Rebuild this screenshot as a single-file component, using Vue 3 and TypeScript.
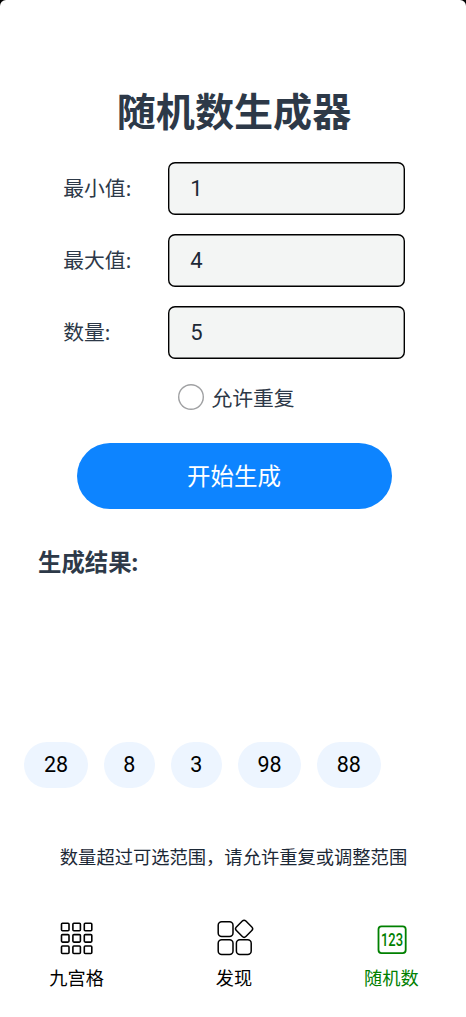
<script setup lang="ts">
import { ref } from 'vue'

const fields = ref([
  { label: '最小值:', value: '1' },
  { label: '最大值:', value: '4' },
  { label: '数量:', value: '5' },
])
const allowRepeat = ref(false)
const results = ref<number[]>([28, 8, 3, 98, 88])
const gridOffsets = [1, 12.4, 23.8]
</script>

<template>
  <div class="backdrop">
    <main class="screen">
      <h1 class="title">随机数生成器</h1>

      <div class="form">
        <label v-for="field in fields" :key="field.label" class="row">
          <span class="label">{{ field.label }}</span>
          <input v-model="field.value" class="input" type="text" inputmode="numeric" />
        </label>
      </div>

      <label class="repeat">
        <input v-model="allowRepeat" class="check" type="checkbox" />
        <span>允许重复</span>
      </label>

      <button class="generate" type="button">开始生成</button>

      <h2 class="subtitle">生成结果:</h2>

      <div class="results">
        <span v-for="(n, i) in results" :key="i" class="chip">{{ n }}</span>
      </div>

      <p class="message">数量超过可选范围，请允许重复或调整范围</p>

      <nav class="tabs">
        <div class="tab">
          <svg class="icon" width="40" height="40" viewBox="0 0 40 40" fill="none" stroke="currentColor" stroke-width="1.6">
            <g transform="translate(3.5 4.2)">
              <template v-for="y in gridOffsets" :key="y">
                <rect v-for="x in gridOffsets" :key="x" :x="x" :y="y" width="7.5" height="7.5" rx="1" />
              </template>
            </g>
          </svg>
          <span>九宫格</span>
        </div>
        <div class="tab">
          <svg class="icon" width="40" height="40" viewBox="0 0 40 40" fill="none" stroke="currentColor" stroke-width="1.5">
            <rect x="4.2" y="3.8" width="14.8" height="14.8" rx="3.5" />
            <rect x="4.2" y="21.8" width="14.8" height="14.8" rx="3.5" />
            <rect x="22.4" y="21.8" width="14.8" height="14.8" rx="3.5" />
            <rect x="23.4" y="4.1" width="13.4" height="13.4" rx="2.5" transform="rotate(45 30.1 10.8)" />
          </svg>
          <span>发现</span>
        </div>
        <div class="tab active">
          <svg class="icon" width="40" height="40" viewBox="0 0 40 40" fill="none">
            <rect x="7.5" y="8.3" width="27.2" height="26.8" rx="3" stroke="currentColor" stroke-width="1.8" />
            <g transform="translate(21 28) scale(0.7 1)">
              <text text-anchor="middle" fill="currentColor" class="digits">123</text>
            </g>
          </svg>
          <span>随机数</span>
        </div>
      </nav>
    </main>
  </div>
</template>

<style>
body {
  margin: 0;
}
</style>

<style scoped>
.backdrop {
  background: #000;
  height: 1017px;
}
.screen {
  box-sizing: border-box;
  height: 1017px;
  padding-top: 82px;
  display: flex;
  flex-direction: column;
  align-items: center;
  overflow: hidden;
  background: #fff;
  border-radius: 6px 6px 0 0;
  color: #2d3948;
  font-family: "Noto Sans", "Noto Sans CJK SC", sans-serif;
}
.title {
  margin: 0 0 0 2px;
  height: 58px;
  line-height: 58px;
  font-size: 39.1px;
  font-weight: 700;
}
.form {
  display: flex;
  flex-direction: column;
  gap: 19.2px;
  width: 341.5px;
  margin-top: 21.8px;
  margin-left: 2px;
}
.row {
  display: flex;
  align-items: center;
  height: 52.8px;
}
.label {
  width: 105px;
  padding-bottom: 2px;
  font-size: 20.8px;
}
.input {
  box-sizing: border-box;
  width: 236.5px;
  height: 52.8px;
  padding: 0 0 0 22px;
  border: 0;
  border-radius: 7px;
  background: #f3f5f4;
  box-shadow: inset 0 0 0 1.4px #000;
  color: #1c2836;
  font: 22px Roboto, sans-serif;
  outline: none;
}
.repeat {
  display: flex;
  align-items: center;
  gap: 7px;
  height: 30px;
  margin-top: 23.6px;
  margin-left: 7px;
  font-size: 20.8px;
}
.repeat span {
  padding-bottom: 1px;
}
.check {
  appearance: none;
  width: 26px;
  height: 26px;
  margin: 0;
  border-radius: 50%;
  box-shadow: inset 0 0 0 1.4px #a0a1a3;
}
.generate {
  flex: none;
  width: 315px;
  height: 66px;
  margin: 30.8px 0 0 2px;
  padding: 0 0 1px;
  border: 0;
  border-radius: 33px;
  background: #0d84ff;
  color: #fff;
  font: 23.5px "Noto Sans", "Noto Sans CJK SC", sans-serif;
}
.subtitle {
  align-self: flex-start;
  height: 36px;
  margin: 35.2px 0 0 38px;
  line-height: 36px;
  font-size: 23.4px;
  font-weight: 700;
}
.results {
  align-self: flex-start;
  display: flex;
  gap: 15.9px;
  margin: 162px 0 0 24.3px;
}
.chip {
  height: 46px;
  padding: 0 19.6px;
  border-radius: 23px;
  background: #edf5ff;
  color: #000;
  font: 21.5px/46px Roboto, sans-serif;
}
.message {
  height: 30px;
  margin: 54px 0 0 1px;
  color: #1c2836;
  font-size: 18.3px;
  line-height: 30px;
  white-space: nowrap;
}
.tabs {
  display: flex;
  justify-content: center;
  margin: 46px 0 0 2px;
  color: #000;
}
.tab {
  display: flex;
  flex-direction: column;
  align-items: center;
  width: 157.4px;
  font-size: 18.2px;
  line-height: 26px;
}
.icon {
  display: block;
  margin-bottom: 6.5px;
}
.active {
  color: #008000;
}
.digits {
  font: 500 18.5px Roboto, sans-serif;
}
</style>
